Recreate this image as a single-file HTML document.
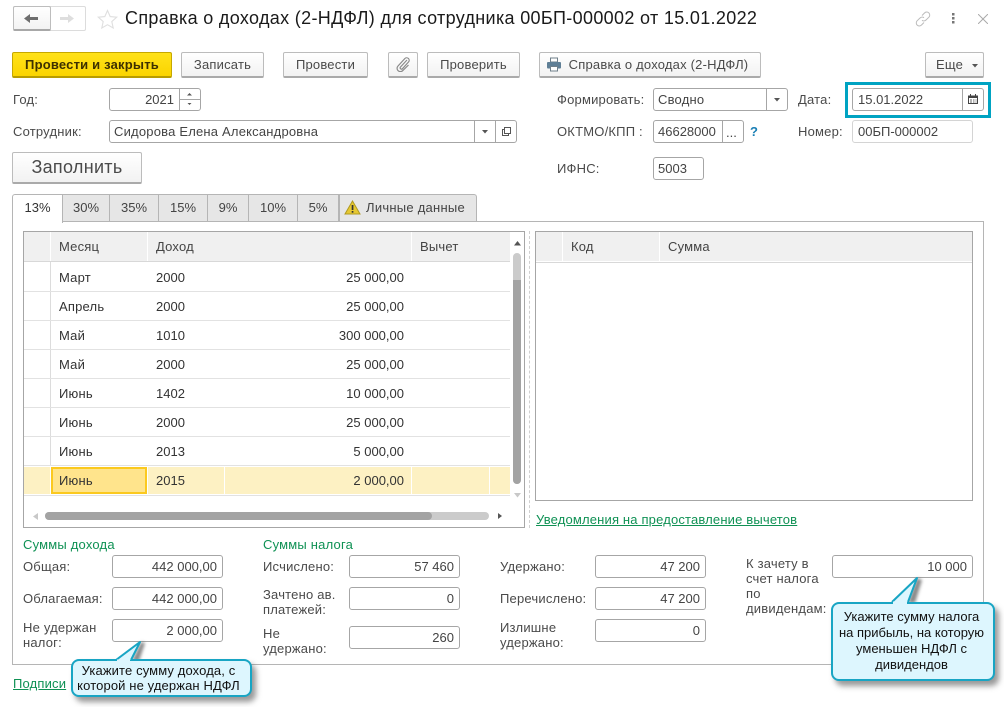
<!DOCTYPE html>
<html lang="ru"><head><meta charset="utf-8"><title>Справка</title>
<style>
html,body{margin:0;padding:0;background:#fff}
body{width:1004px;height:707px;position:relative;overflow:hidden;font:13px/16px "Liberation Sans",Arial,sans-serif;color:#4a4a4a;letter-spacing:.2px}
div,a,svg{position:absolute;box-sizing:border-box}
.t{white-space:nowrap;height:16px}
.g{color:#0f9154}
.btn{height:26px;border:1px solid #bcbcbc;border-bottom:2px solid #aaa;border-radius:2px;background:linear-gradient(#fff,#f2f2f2);text-align:center;line-height:23px;color:#4a4a4a;white-space:nowrap}
.f{border:1px solid #a6a6a6;border-radius:3px;background:#fff;height:23px;line-height:21px;white-space:nowrap;color:#444}
.r{text-align:right;padding-right:7px;letter-spacing:0}
.n{letter-spacing:0}
.l{padding-left:4px}
.v{width:1px;background:#a6a6a6;top:0;bottom:0}
.tab{top:194px;height:27px;border:1px solid #b5b5b5;border-bottom:none;border-left:none;background:#e6e6e6;text-align:center;line-height:26px;color:#444;letter-spacing:0}
.h{background:#f0f0f0;height:29px;top:232px;line-height:29px;padding-left:8px;color:#444}
.row{left:24px;width:486px;height:1px;background:#e2e2e2}
.vl{width:1px;background:#e2e2e2}
.cell{white-space:nowrap;height:16px;color:#333}
.num{letter-spacing:0}
.lnk{color:#0f9154;text-decoration:underline;white-space:nowrap;letter-spacing:.17px}
.call{background:#ddf6fe;border:2px solid #18a5c4;border-radius:8px;color:#111;text-align:center;white-space:nowrap;box-shadow:4px 5px 6px rgba(70,70,70,.55);letter-spacing:0}
.sh{filter:blur(1.5px)}
</style></head><body>

<!-- nav -->
<div style="left:13px;top:6px;width:73px;height:25px;border:1px solid #dcdcdc;border-radius:2px;background:#fff"></div>
<div style="left:13px;top:6px;width:38px;height:25px;border:1px solid #bdbdbd;border-bottom:2px solid #a8a8a8;border-radius:2px;background:linear-gradient(#fff,#f3f3f3)"></div>
<svg style="left:24px;top:12px" width="16" height="13"><path d="M0 6.500L6 2V5H14V8H6V11Z" fill="#6e6e6e"/></svg>
<svg style="left:60px;top:12px" width="16" height="13"><path d="M14 6.500L8 2V5H0V8H8V11Z" fill="#dedede"/></svg>
<svg style="left:97px;top:9px" width="21" height="20"><path d="M10.500 1.500L13.200 7.600 19.700 8.200 14.800 12.600 16.200 19 10.500 15.700 4.800 19 6.200 12.600 1.300 8.200 7.800 7.600Z" fill="none" stroke="#dfdfdf" stroke-width="1.100"/></svg>
<div class="t" style="left:125px;top:7px;height:22px;font-size:18px;line-height:22px;color:#1a1a1a;letter-spacing:.33px">Справка о доходах (2-НДФЛ) для сотрудника 00БП-000002 от 15.01.2022</div>
<svg style="left:914px;top:10px" width="18" height="18" fill="none" stroke="#bbb" stroke-width="1"><path d="M8 5.500L10.500 3a3 3 0 0 1 4.400 4.200L12 10a3 3 0 0 1-4 .3"/><path d="M10 12.500L7.500 15A3 3 0 0 1 3.100 10.800L6 8a3 3 0 0 1 4-.3"/></svg>
<svg style="left:951px;top:13px" width="5" height="11" fill="#777"><rect x="1" y="0" width="2.500" height="2.500"/><rect x="1" y="4" width="2.500" height="2.500"/><rect x="1" y="8" width="2.500" height="2.500"/></svg>
<svg style="left:978px;top:14px" width="10" height="10" stroke="#aaa" stroke-width="1"><path d="M0 0L10 10M10 0L0 10"/></svg>

<!-- toolbar -->
<div class="btn" style="left:12px;top:52px;width:160px;background:linear-gradient(#ffe21a,#fbd400);border-color:#c6a800;border-bottom-color:#b89c00;color:#3d3000;font-weight:bold">Провести и закрыть</div>
<div class="btn" style="left:181px;top:52px;width:83px">Записать</div>
<div class="btn" style="left:283px;top:52px;width:85px">Провести</div>
<div class="btn" style="left:388px;top:52px;width:30px"></div>
<svg style="left:396px;top:57px" width="14" height="15" fill="none" stroke="#8a8a8a" stroke-width="1.200"><path d="M11 3L4.500 10a1.200 1.200 0 0 0 2 1.700L12.500 5a2.500 2.500 0 0 0-3.700-3.400L2 9a3.300 3.300 0 0 0 4.800 4.600L12.500 8"/></svg>
<div class="btn" style="left:427px;top:52px;width:93px">Проверить</div>
<div class="btn" style="left:539px;top:52px;width:222px;padding-left:17px">Справка о доходах (2-НДФЛ)</div>
<svg style="left:546px;top:57px" width="16" height="15"><path d="M4.500 1H11.500V5H4.500Z" fill="#fff" stroke="#6f7f8a"/><rect x="1" y="5" width="14" height="6.500" rx="1" fill="#5f7f96"/><rect x="4.500" y="9.500" width="7" height="4.500" fill="#fff" stroke="#6f7f8a"/></svg>
<div class="btn" style="left:925px;top:52px;width:59px;padding-right:10px">Еще</div>
<svg style="left:972px;top:64px" width="6" height="4"><path d="M0 0H6L3 3.500Z" fill="#555"/></svg>

<!-- header fields -->
<div class="t" style="left:13px;top:92px">Год:</div>
<div class="f r" style="left:109px;top:88px;width:92px;padding-right:26px">2021<div class="v" style="left:69px"></div><div style="left:70px;top:10px;width:21px;height:1px;background:#a6a6a6"></div></div>
<svg style="left:186px;top:92px" width="7" height="15" fill="#555"><path d="M1 3.500H6L3.500 1ZM1.500 11H5.500L3.500 13Z"/></svg>
<div class="t" style="left:13px;top:124px">Сотрудник:</div>
<div class="f l" style="left:109px;top:120px;width:408px;height:23px">Сидорова Елена Александровна<div class="v" style="left:364px"></div><div class="v" style="left:385px"></div></div>
<svg style="left:482px;top:130px" width="6" height="4"><path d="M0 0H6L3 3.500Z" fill="#555"/></svg>
<svg style="left:502px;top:127px" width="9" height="9" fill="none" stroke="#555"><path d="M2.500 .5H8.500V6.500H2.500ZM2.500 2.500H.5V8.500H6.500V6.500"/></svg>
<div class="btn" style="left:12px;top:152px;width:130px;height:32px;font-size:18px;line-height:29px;letter-spacing:.3px">Заполнить</div>

<div class="t" style="left:557px;top:92px">Формировать:</div>
<div class="f l" style="left:653px;top:88px;width:135px;height:23px">Сводно<div class="v" style="left:112px"></div></div>
<svg style="left:774px;top:98px" width="6" height="4"><path d="M0 0H6L3 3.500Z" fill="#555"/></svg>
<div class="t" style="left:798px;top:92px">Дата:</div>
<div style="left:845px;top:82px;width:146px;height:36px;border:3px solid #00a3c2"></div>
<div class="f n" style="left:852px;top:88px;width:132px;padding-left:5px">15.01.2022<div class="v" style="left:109px"></div></div>
<svg style="left:968px;top:94px" width="10" height="10"><rect x=".5" y="2" width="9" height="7.500" fill="none" stroke="#444"/><rect x="0" y="1.500" width="10" height="2.500" fill="#444"/><path d="M2.500 0V2M7.500 0V2" stroke="#444"/><path d="M2 6H4M5 6H6.500M7.500 6H8.500M2 8H4M5 8H6.500M7.500 8H8.500" stroke="#666"/></svg>

<div class="t" style="left:557px;top:124px">ОКТМО/КПП :</div>
<div class="f l n" style="left:653px;top:120px;width:91px">46628000<div class="v" style="left:68px"></div><div class="t" style="left:72px;top:1px">...</div></div>
<div class="t" style="left:750px;top:124px;color:#1a7fb5;font-weight:bold">?</div>
<div class="t" style="left:798px;top:124px">Номер:</div>
<div class="f n" style="left:852px;top:120px;width:121px;padding-left:5px;border-color:#d4d4d4">00БП-000002</div>
<div class="t" style="left:557px;top:161px">ИФНС:</div>
<div class="f l n" style="left:653px;top:157px;width:51px">5003</div>

<!-- tabs and panel -->
<div style="left:12px;top:221px;width:972px;height:444px;border:1px solid #b5b5b5"></div>
<div style="left:12px;top:194px;width:51px;height:29px;background:#fff;border:1px solid #b5b5b5;border-bottom:none;border-radius:3px 0 0 0;text-align:center;line-height:26px;color:#333;letter-spacing:0">13%</div>
<div class="tab" style="left:63px;width:47px">30%</div>
<div class="tab" style="left:110px;width:49px">35%</div>
<div class="tab" style="left:159px;width:49px">15%</div>
<div class="tab" style="left:208px;width:41px">9%</div>
<div class="tab" style="left:249px;width:49px">10%</div>
<div class="tab" style="left:298px;width:41px">5%</div>
<div class="tab" style="left:339px;width:138px;padding-left:15px;border-radius:0 3px 0 0;border-left:1px solid #b5b5b5;letter-spacing:.25px">Личные данные</div>
<svg style="left:344px;top:200px" width="17" height="15"><path d="M8.500 1L16 14H1Z" fill="#e6c832" stroke="#b09a20"/><rect x="7.700" y="5" width="1.700" height="5" fill="#333"/><rect x="7.700" y="11" width="1.700" height="1.700" fill="#333"/></svg>

<!-- left table -->
<div style="left:23px;top:231px;width:502px;height:297px;border:1px solid #a6a6a6"></div>
<div class="h" style="left:24px;width:26px"></div>
<div class="h" style="left:51px;width:96px">Месяц</div>
<div class="h" style="left:148px;width:263px">Доход</div>
<div class="h" style="left:412px;width:98px">Вычет</div>
<div class="row" style="top:261px;background:#d8d8d8"></div>
<div class="vl" style="left:50px;top:262px;height:204px;background:#dcdcdc"></div>
<div class="row" style="top:291px"></div><div class="row" style="top:320px"></div><div class="row" style="top:349px"></div><div class="row" style="top:378px"></div><div class="row" style="top:407px"></div><div class="row" style="top:436px"></div><div class="row" style="top:465px"></div><div class="row" style="top:495px"></div>
<div style="left:24px;top:467px;width:486px;height:27px;background:#fdf1c3"></div>
<div style="left:51px;top:467px;width:96px;height:27px;background:#ffe48c;border:2px solid #fbc91f"></div>
<div class="vl" style="left:50px;top:467px;height:27px;background:#fff"></div>
<div class="vl" style="left:147px;top:467px;height:27px;background:#fff"></div>
<div class="vl" style="left:224px;top:467px;height:27px;background:#fff"></div>
<div class="vl" style="left:411px;top:467px;height:27px;background:#fff"></div>
<div class="vl" style="left:489px;top:467px;height:27px;background:#fff"></div>

<div class="cell" style="left:59px;top:270px">Март</div><div class="cell num" style="left:156px;top:270px">2000</div><div class="cell num" style="right:600px;top:270px">25 000,00</div>
<div class="cell" style="left:59px;top:299px">Апрель</div><div class="cell num" style="left:156px;top:299px">2000</div><div class="cell num" style="right:600px;top:299px">25 000,00</div>
<div class="cell" style="left:59px;top:328px">Май</div><div class="cell num" style="left:156px;top:328px">1010</div><div class="cell num" style="right:600px;top:328px">300 000,00</div>
<div class="cell" style="left:59px;top:357px">Май</div><div class="cell num" style="left:156px;top:357px">2000</div><div class="cell num" style="right:600px;top:357px">25 000,00</div>
<div class="cell" style="left:59px;top:386px">Июнь</div><div class="cell num" style="left:156px;top:386px">1402</div><div class="cell num" style="right:600px;top:386px">10 000,00</div>
<div class="cell" style="left:59px;top:415px">Июнь</div><div class="cell num" style="left:156px;top:415px">2000</div><div class="cell num" style="right:600px;top:415px">25 000,00</div>
<div class="cell" style="left:59px;top:444px">Июнь</div><div class="cell num" style="left:156px;top:444px">2013</div><div class="cell num" style="right:600px;top:444px">5 000,00</div>
<div class="cell" style="left:59px;top:473px">Июнь</div><div class="cell num" style="left:156px;top:473px">2015</div><div class="cell num" style="right:600px;top:473px">2 000,00</div>

<!-- scrollbars -->
<svg style="left:514px;top:241px" width="7" height="5"><path d="M0 4.500H7L3.500 0Z" fill="#555"/></svg>
<div style="left:513px;top:253px;width:8px;height:231px;background:#cbcbcb;border-radius:4px"></div>
<div style="left:513px;top:280px;width:8px;height:204px;background:#a3a3a3;border-radius:0 0 4px 4px"></div>
<svg style="left:514px;top:493px" width="7" height="5"><path d="M0 0H7L3.500 4.500Z" fill="#c8c8c8"/></svg>
<svg style="left:33px;top:513px" width="5" height="7"><path d="M5 0V7L0 3.500Z" fill="#c8c8c8"/></svg>
<div style="left:45px;top:512px;width:444px;height:8px;background:#cbcbcb;border-radius:4px"></div>
<div style="left:45px;top:512px;width:387px;height:8px;background:#a3a3a3;border-radius:4px"></div>
<svg style="left:498px;top:513px" width="5" height="6"><path d="M0 0V6L4 3Z" fill="#555"/></svg>

<!-- divider -->
<div style="left:529px;top:231px;height:297px;width:1px;border-left:1px dashed #d0d0d0"></div>

<!-- right table -->
<div style="left:535px;top:231px;width:438px;height:270px;border:1px solid #a6a6a6"></div>
<div class="h" style="left:536px;width:26px"></div>
<div class="h" style="left:563px;width:96px">Код</div>
<div class="h" style="left:660px;width:312px">Сумма</div>
<div style="left:536px;top:262px;width:436px;height:1px;background:#d8d8d8"></div>
<a class="lnk t" style="left:536px;top:512px">Уведомления на предоставление вычетов</a>

<!-- bottom -->
<div class="t g" style="left:23px;top:537px">Суммы дохода</div>
<div class="t g" style="left:263px;top:537px">Суммы налога</div>
<div class="t" style="left:23px;top:559px">Общая:</div>
<div class="t" style="left:23px;top:591px">Облагаемая:</div>
<div style="left:23px;top:620px;line-height:15px;white-space:nowrap">Не удержан<br>налог:</div>
<div class="f r" style="left:112px;top:555px;width:111px;padding-right:5px">442 000,00</div>
<div class="f r" style="left:112px;top:587px;width:111px;padding-right:5px">442 000,00</div>
<div class="f r" style="left:112px;top:619px;width:111px;padding-right:5px">2 000,00</div>

<div class="t" style="left:263px;top:559px">Исчислено:</div>
<div style="left:263px;top:587px;line-height:15px;white-space:nowrap">Зачтено ав.<br>платежей:</div>
<div style="left:263px;top:626px;line-height:15px;white-space:nowrap">Не<br>удержано:</div>
<div class="f r" style="left:349px;top:555px;width:111px;padding-right:5px">57 460</div>
<div class="f r" style="left:349px;top:587px;width:111px;padding-right:5px">0</div>
<div class="f r" style="left:349px;top:626px;width:111px;padding-right:5px">260</div>

<div class="t" style="left:500px;top:559px">Удержано:</div>
<div class="t" style="left:500px;top:591px">Перечислено:</div>
<div style="left:500px;top:620px;line-height:15px;white-space:nowrap">Излишне<br>удержано:</div>
<div class="f r" style="left:595px;top:555px;width:111px;padding-right:5px">47 200</div>
<div class="f r" style="left:595px;top:587px;width:111px;padding-right:5px">47 200</div>
<div class="f r" style="left:595px;top:619px;width:111px;padding-right:5px">0</div>

<div style="left:746px;top:556px;line-height:15px;white-space:nowrap">К зачету в<br>счет налога<br>по<br>дивидендам:</div>
<div class="f r" style="left:832px;top:555px;width:141px;padding-right:5px">10 000</div>

<a class="lnk t" style="left:13px;top:676px">Подписи</a>

<!-- callouts -->
<svg class="sh" style="left:112px;top:640px;overflow:visible" width="40" height="24"><path d="M29 2L33 3 27 21 20 21Z" fill="#555" opacity=".7"/></svg>
<div class="call" style="left:71px;top:659px;width:181px;height:38px;padding:2px 6px 0 0;line-height:15px;letter-spacing:.12px">Укажите сумму дохода, с<br>которой не удержан НДФЛ</div>
<svg style="left:112px;top:640px;overflow:visible" width="40" height="24"><path d="M4 20L28 2 19 20" fill="#ddf6fe" stroke="#18a5c4" stroke-width="2" stroke-linejoin="round"/><path d="M5 19.500H18V22.500H5Z" fill="#ddf6fe"/></svg>
<svg class="sh" style="left:888px;top:576px;overflow:visible" width="40" height="30"><path d="M29 2L34 4 27 27 20 27Z" fill="#555" opacity=".7"/></svg>
<div class="call" style="left:831px;top:602px;width:164px;height:79px;padding:5px 3px 0 0;line-height:16px">Укажите сумму налога<br>на прибыль, на которую<br>уменьшен НДФЛ с<br>дивидендов</div>
<svg style="left:888px;top:576px;overflow:visible" width="40" height="30"><path d="M4 26L29 2 20 26" fill="#ddf6fe" stroke="#18a5c4" stroke-width="2" stroke-linejoin="round"/><path d="M5 25.500H19V28.500H5Z" fill="#ddf6fe"/></svg>
</body></html>
